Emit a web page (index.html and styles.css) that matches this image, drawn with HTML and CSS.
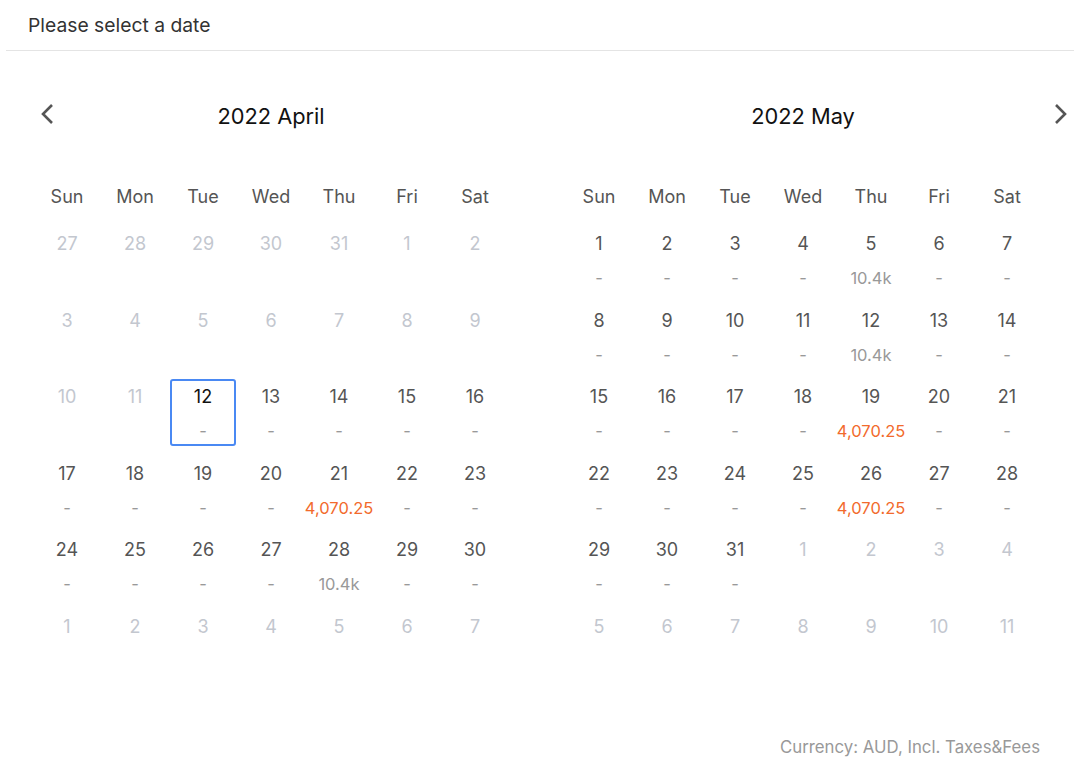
FILE: index.html
```html
<!DOCTYPE html>
<html>
<head>
    <meta charset="utf-8">
    <link rel="stylesheet" href="styles.css">
    <title>Select date</title>
</head>
<body>
    <div class="header">Please select a date</div>

    <div class="calendars">
        <button class="nav prev" aria-label="Previous month">
            <svg width="14" height="22" viewBox="0 0 14 22"><polyline points="12,2 3,11 12,20" fill="none" stroke="#555" stroke-width="2.6"/></svg>
        </button>
        <button class="nav next" aria-label="Next month">
            <svg width="14" height="22" viewBox="0 0 14 22"><polyline points="2,2 11,11 2,20" fill="none" stroke="#555" stroke-width="2.6"/></svg>
        </button>

        <div class="month">
            <div class="month-title">2022 April</div>
            <div class="weekdays">
                <div>Sun</div><div>Mon</div><div>Tue</div><div>Wed</div><div>Thu</div><div>Fri</div><div>Sat</div>
            </div>
            <div class="days">
                <div class="day off"><span class="num">27</span></div>
                <div class="day off"><span class="num">28</span></div>
                <div class="day off"><span class="num">29</span></div>
                <div class="day off"><span class="num">30</span></div>
                <div class="day off"><span class="num">31</span></div>
                <div class="day off"><span class="num">1</span></div>
                <div class="day off"><span class="num">2</span></div>

                <div class="day off"><span class="num">3</span></div>
                <div class="day off"><span class="num">4</span></div>
                <div class="day off"><span class="num">5</span></div>
                <div class="day off"><span class="num">6</span></div>
                <div class="day off"><span class="num">7</span></div>
                <div class="day off"><span class="num">8</span></div>
                <div class="day off"><span class="num">9</span></div>

                <div class="day off"><span class="num">10</span></div>
                <div class="day off"><span class="num">11</span></div>
                <div class="day selected"><span class="num">12</span><span class="price">-</span></div>
                <div class="day"><span class="num">13</span><span class="price">-</span></div>
                <div class="day"><span class="num">14</span><span class="price">-</span></div>
                <div class="day"><span class="num">15</span><span class="price">-</span></div>
                <div class="day"><span class="num">16</span><span class="price">-</span></div>

                <div class="day"><span class="num">17</span><span class="price">-</span></div>
                <div class="day"><span class="num">18</span><span class="price">-</span></div>
                <div class="day"><span class="num">19</span><span class="price">-</span></div>
                <div class="day"><span class="num">20</span><span class="price">-</span></div>
                <div class="day"><span class="num">21</span><span class="price low">4,070.25</span></div>
                <div class="day"><span class="num">22</span><span class="price">-</span></div>
                <div class="day"><span class="num">23</span><span class="price">-</span></div>

                <div class="day"><span class="num">24</span><span class="price">-</span></div>
                <div class="day"><span class="num">25</span><span class="price">-</span></div>
                <div class="day"><span class="num">26</span><span class="price">-</span></div>
                <div class="day"><span class="num">27</span><span class="price">-</span></div>
                <div class="day"><span class="num">28</span><span class="price">10.4k</span></div>
                <div class="day"><span class="num">29</span><span class="price">-</span></div>
                <div class="day"><span class="num">30</span><span class="price">-</span></div>

                <div class="day off"><span class="num">1</span></div>
                <div class="day off"><span class="num">2</span></div>
                <div class="day off"><span class="num">3</span></div>
                <div class="day off"><span class="num">4</span></div>
                <div class="day off"><span class="num">5</span></div>
                <div class="day off"><span class="num">6</span></div>
                <div class="day off"><span class="num">7</span></div>
            </div>
        </div>

        <div class="month">
            <div class="month-title">2022 May</div>
            <div class="weekdays">
                <div>Sun</div><div>Mon</div><div>Tue</div><div>Wed</div><div>Thu</div><div>Fri</div><div>Sat</div>
            </div>
            <div class="days">
                <div class="day"><span class="num">1</span><span class="price">-</span></div>
                <div class="day"><span class="num">2</span><span class="price">-</span></div>
                <div class="day"><span class="num">3</span><span class="price">-</span></div>
                <div class="day"><span class="num">4</span><span class="price">-</span></div>
                <div class="day"><span class="num">5</span><span class="price">10.4k</span></div>
                <div class="day"><span class="num">6</span><span class="price">-</span></div>
                <div class="day"><span class="num">7</span><span class="price">-</span></div>

                <div class="day"><span class="num">8</span><span class="price">-</span></div>
                <div class="day"><span class="num">9</span><span class="price">-</span></div>
                <div class="day"><span class="num">10</span><span class="price">-</span></div>
                <div class="day"><span class="num">11</span><span class="price">-</span></div>
                <div class="day"><span class="num">12</span><span class="price">10.4k</span></div>
                <div class="day"><span class="num">13</span><span class="price">-</span></div>
                <div class="day"><span class="num">14</span><span class="price">-</span></div>

                <div class="day"><span class="num">15</span><span class="price">-</span></div>
                <div class="day"><span class="num">16</span><span class="price">-</span></div>
                <div class="day"><span class="num">17</span><span class="price">-</span></div>
                <div class="day"><span class="num">18</span><span class="price">-</span></div>
                <div class="day"><span class="num">19</span><span class="price low">4,070.25</span></div>
                <div class="day"><span class="num">20</span><span class="price">-</span></div>
                <div class="day"><span class="num">21</span><span class="price">-</span></div>

                <div class="day"><span class="num">22</span><span class="price">-</span></div>
                <div class="day"><span class="num">23</span><span class="price">-</span></div>
                <div class="day"><span class="num">24</span><span class="price">-</span></div>
                <div class="day"><span class="num">25</span><span class="price">-</span></div>
                <div class="day"><span class="num">26</span><span class="price low">4,070.25</span></div>
                <div class="day"><span class="num">27</span><span class="price">-</span></div>
                <div class="day"><span class="num">28</span><span class="price">-</span></div>

                <div class="day"><span class="num">29</span><span class="price">-</span></div>
                <div class="day"><span class="num">30</span><span class="price">-</span></div>
                <div class="day"><span class="num">31</span><span class="price">-</span></div>
                <div class="day off"><span class="num">1</span></div>
                <div class="day off"><span class="num">2</span></div>
                <div class="day off"><span class="num">3</span></div>
                <div class="day off"><span class="num">4</span></div>

                <div class="day off"><span class="num">5</span></div>
                <div class="day off"><span class="num">6</span></div>
                <div class="day off"><span class="num">7</span></div>
                <div class="day off"><span class="num">8</span></div>
                <div class="day off"><span class="num">9</span></div>
                <div class="day off"><span class="num">10</span></div>
                <div class="day off"><span class="num">11</span></div>
            </div>
        </div>
    </div>

    <div class="footer">Currency: AUD, Incl. Taxes&amp;Fees</div>
</body>
</html>
```

FILE: styles.css
```css
body {
    font-family: Inter, 'Liberation Sans', Arial, sans-serif;
    margin: 0;
    background-color: white;
    color: #555;
    width: 1080px;
    height: 782px;
    overflow: hidden;
}
.header {
    margin: 0 6px;
    padding: 13px 0 0 22px;
    height: 37px;
    line-height: 24px;
    font-size: 19.3px;
    color: #333;
    border-bottom: 1px solid #e4e4e4;
}
.calendars {
    position: relative;
    display: flex;
    gap: 58px;
    padding: 50px 0 0 34px;
}
.nav {
    position: absolute;
    top: 52px;
    border: none;
    background: none;
    padding: 0;
    cursor: pointer;
}
.nav.prev {
    left: 40px;
}
.nav.next {
    left: 1054px;
}
.month {
    width: 474px;
}
.month-title {
    text-align: center;
    font-size: 21.8px;
    line-height: 30px;
    color: #111;
}
.weekdays, .days {
    display: grid;
    grid-template-columns: repeat(7, 66px);
    column-gap: 2px;
}
.weekdays {
    margin-top: 54px;
    text-align: center;
    font-size: 18px;
    line-height: 24px;
}
.days {
    margin-top: 17px;
    row-gap: 9.6px;
}
.day {
    box-sizing: border-box;
    height: 67px;
    padding-top: 6px;
    display: flex;
    flex-direction: column;
    align-items: center;
}
.day.selected {
    border: 2px solid #4a89f3;
    border-radius: 3px;
    padding-top: 4px;
}
.day.selected .num {
    color: #111;
}
.num {
    font-size: 18px;
    line-height: 24px;
}
.off .num {
    color: #c3c7cf;
}
.price {
    margin-top: 12px;
    font-size: 16.5px;
    line-height: 20px;
    color: #999;
}
.price.low {
    color: #f26a2c;
}
.footer {
    position: absolute;
    left: 0;
    right: 40px;
    top: 737px;
    text-align: right;
    font-size: 16.8px;
    line-height: 20px;
    color: #999;
}
```
